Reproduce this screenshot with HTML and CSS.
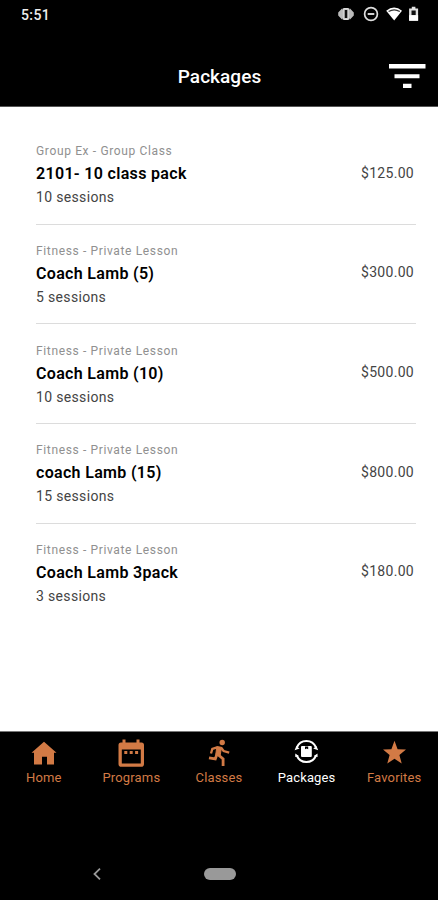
FILE: index.html
```html
<!DOCTYPE html>
<html lang="en">
<head>
<meta charset="utf-8">
<title>Packages</title>
<link rel="stylesheet" href="styles.css">
</head>
<body>
<div class="phone">
  <div class="status">
    <span class="time">5:51</span>
    <svg class="status-icons" width="84" height="20" viewBox="0 0 84 20" fill="none" stroke="#ddd">
      <path d="M6 4.500v11L2.200 11.500v-3zM14 4.500v11l3.800-4v-3z" fill="#bbb" stroke="none"/>
      <rect x="6.900" y="4.700" width="6.200" height="10.600" rx="1.400" fill="#bbb" stroke-width="1.500"/><path d="M10 6v8" stroke="#111" stroke-width="2.400"/>
      <circle cx="35" cy="10" r="6.400" stroke-width="1.700"/><path d="M31.700 10h6.600" stroke-width="1.900"/>
      <path d="M50.200 6.800Q58.100 0.400 66 6.800L58.200 16.500Z" fill="#fff" stroke="none"/><path d="M52.600 7.600Q58.200 4.200 63.800 7.600" stroke="#333" stroke-width="1.200"/>
      <path d="M75.800 2.800h3.600v1.600h2.700v12.300h-9V4.400h2.700z" fill="#e2e2e2" stroke="none"/><path d="M75.500 6.500h4.200v4.700h-4.200z" fill="#111" stroke="none"/><path d="M73.100 11.200h9v5.500h-9z" fill="#fff" stroke="none"/>
    </svg>
  </div>
  <header class="bar">
    <h1>Packages</h1>
    <svg class="filter" width="38" height="26" viewBox="0 0 38 26" fill="#fff"><path d="M1 0h36.500v4.600H1zM6.500 10.300h25v4h-25zM15 19.700h8.500v4.400H15z"/></svg>
  </header>
  <main class="list">
    <article class="row"><div><p class="kind">Group Ex - Group Class</p><h2>2101- 10 class pack</h2><p class="count">10 sessions</p></div><span class="price">$125.00</span></article>
    <article class="row"><div><p class="kind">Fitness - Private Lesson</p><h2>Coach Lamb (5)</h2><p class="count">5 sessions</p></div><span class="price">$300.00</span></article>
    <article class="row"><div><p class="kind">Fitness - Private Lesson</p><h2>Coach Lamb (10)</h2><p class="count">10 sessions</p></div><span class="price">$500.00</span></article>
    <article class="row"><div><p class="kind">Fitness - Private Lesson</p><h2>coach Lamb (15)</h2><p class="count">15 sessions</p></div><span class="price">$800.00</span></article>
    <article class="row"><div><p class="kind">Fitness - Private Lesson</p><h2>Coach Lamb 3pack</h2><p class="count">3 sessions</p></div><span class="price">$180.00</span></article>
  </main>
  <nav class="tabs">
    <a class="tab"><svg width="30" height="30" viewBox="0 0 30 30" fill="currentColor"><path d="M15 2.800 27.500 13.700H25V25.500h-7v-7.700h-5v7.700H5V13.700H2.500z"/></svg><span>Home</span></a>
    <a class="tab"><svg width="30" height="30" viewBox="0 0 30 30" fill="currentColor"><path fill-rule="evenodd" d="M6.500 .4h3v3h11v-3h3v3h2Q28 3.400 28 5.900v19Q28 27.700 25.200 27.700H5.300Q2.500 27.700 2.500 24.900v-19Q2.500 3.400 5 3.400h1.500zM5.800 10.400v14h19v-14z"/><path d="M8.300 12h3v3h-3zM13.700 12h3v3h-3zM19.100 12h3v3h-3z"/></svg><span>Programs</span></a>
    <a class="tab"><svg width="30" height="30" viewBox="0 0 30 30" fill="none" stroke="currentColor"><circle cx="18.200" cy="3.500" r="2.700" fill="currentColor" stroke="none"/><path d="M12.800 7.500 17.500 8.300 16 17.500 11.800 15.500z" fill="currentColor" stroke-width="1"/><path d="M13 8.300 8.300 10 7 14.500M17 8.500l2.600 3.500 5.600 1.700" stroke-width="2.300"/><path d="M13 15 11.300 20 5 18.800M14.500 16l4.600 3.800v7.200" stroke-width="2.800"/></svg><span>Classes</span></a>
    <a class="tab active"><svg width="30" height="30" viewBox="0 0 30 30" fill="none" stroke="currentColor"><path d="M4.800 8.500A10.400 10.700 0 0 1 24 8.500M24 16.500A10.400 10.700 0 0 1 4.800 16.500" stroke-width="2"/><path d="M2.600 11.300 4.200 7.200l3.400 2.300zM26.200 11.300 24.600 7.200l-3.400 2.300zM3.300 14.500l-.1 3.500 3.700-1zM25.500 14.500l.1 3.500-3.700-1z" fill="currentColor" stroke="none"/><rect x="9" y="7" width="10.800" height="11" rx="1" fill="currentColor" stroke="none"/><path d="M13 7.500h3.200v2.800l-1.600-.7-1.600.7z" fill="#000" stroke="none"/></svg><span>Packages</span></a>
    <a class="tab"><svg width="30" height="30" viewBox="0 0 30 30" fill="currentColor"><path d="m15.500 1.700 3.100 8.500 8.400.4-6.600 5.300 2.300 8.700-7.200-4.900-7.200 4.900 2.300-8.700L4 10.600l8.400-.4z"/></svg><span>Favorites</span></a>
  </nav>
  <footer class="system">
    <svg width="10" height="14" viewBox="0 0 10 14" fill="none" stroke="#999" stroke-width="1.800"><path d="M8 1.700 2.500 7 8 12.300"/></svg>
    <span class="pill"></span>
  </footer>
</div>
</body>
</html>
```
FILE: styles.css
```css
* { box-sizing: border-box; margin: 0; padding: 0; }
body { font-family: Roboto, "Liberation Sans", sans-serif; background: #fff; }
.phone { width: 438px; height: 900px; display: flex; flex-direction: column; overflow: hidden; }
.status { height: 46px; background: #000; color: #eee; display: flex; justify-content: space-between; padding: 4px 18px 0 21px; }
.time { font-size: 14px; line-height: 22px; font-weight: 500; letter-spacing: .4px; }
.bar { height: 61px; background: #000; color: #fff; display: grid; grid-template-columns: 1fr auto 1fr; border-bottom: 1px solid #555; padding: 18px 11px 0 12px; }
.bar h1 { grid-column: 2; font-size: 19px; line-height: 26px; font-weight: 500; letter-spacing: .05px; }
.filter { justify-self: end; margin-right: 1px; }
.list { flex: 1; padding: 18px 22px 0 36px; }
.row { height: 99.700px; display: flex; justify-content: space-between; padding-top: 18.200px; border-bottom: 1px solid #dcdcdc; }
.row:last-child { border-bottom: 0; }
.kind { font-size: 12px; line-height: 16px; letter-spacing: .64px; color: #909090; }
.row h2 { font-size: 16px; line-height: 20px; font-weight: 600; letter-spacing: .32px; margin: 5px 0 4px; color: #000; }
.count { font-size: 14px; line-height: 19px; letter-spacing: .34px; color: #444; }
.price { font-size: 14px; line-height: 20px; letter-spacing: .3px; color: #444; margin-top: 19.500px; padding-right: 2px; }
.tabs { height: 117px; background: #000; border-top: 1px solid #777; display: flex; }
.tab { flex: 1; display: flex; flex-direction: column; align-items: center; color: #d27a45; padding-top: 7px; font-size: 13px; line-height: 18px; letter-spacing: .15px; }
.tab.active { color: #fff; }
.system { height: 52px; background: #000; display: flex; align-items: center; padding: 0 0 0 92px; }
.pill { width: 32px; height: 12px; margin-left: 102px; border-radius: 6px; background: #999; }
```
